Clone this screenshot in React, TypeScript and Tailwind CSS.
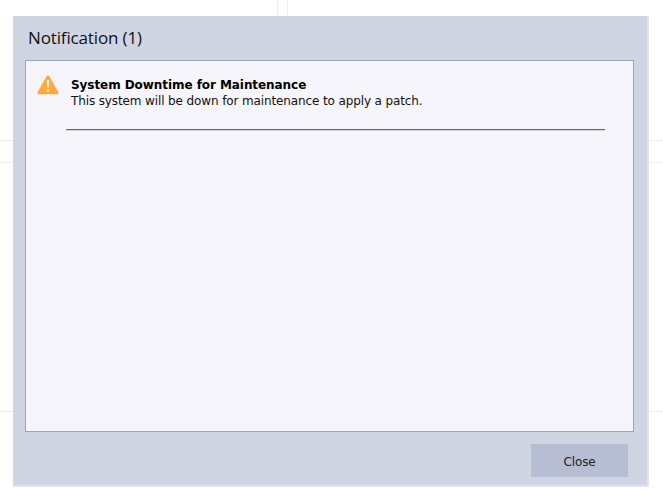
import { useState } from 'react';

// faint grid of the page sitting behind the dialog
function BackdropLines() {
  return (
    <div className="absolute inset-0 overflow-hidden">
      <div className="absolute left-[277px] top-0 h-[16px] w-px bg-[#eeeeee]" />
      <div className="absolute left-[287px] top-0 h-[16px] w-px bg-[#eeeeee]" />
      <div className="absolute left-0 top-[140px] h-px w-full bg-[#eeeeee]" />
      <div className="absolute left-0 top-[162px] h-px w-full bg-[#eeeeee]" />
      <div className="absolute left-0 top-[411px] h-px w-full bg-[#eeeeee]" />
    </div>
  );
}

function WarningIcon() {
  return (
    <svg width="22" height="20" viewBox="0 0 22 20" className="shrink-0">
      <path
        d="M11 0.5c.6 0 1.1.3 1.4.8l8.9 15.6c.6 1.1-.2 2.4-1.4 2.4H2.1c-1.2 0-2-1.3-1.4-2.4L9.6 1.3c.3-.5.8-.8 1.4-.8z"
        fill="#ffaa3b"
      />
      <path d="M9.7 5h2.6l-.5 8h-1.6z" fill="#ffe9cc" />
      <circle cx="11" cy="15.4" r="1.4" fill="#ffe9cc" />
    </svg>
  );
}

export default function App() {
  const [open, setOpen] = useState(true);

  return (
    <div className="relative h-[494px] w-[663px] overflow-hidden bg-white font-['DejaVu_Sans',sans-serif]">
      <BackdropLines />
      {open && (
        <div className="relative ml-[13px] mt-[16px] flex h-[469px] w-[634px] flex-col bg-[#cfd5e2] shadow-[1px_1px_0_1px_#e4e4e4]">
          <div className="flex h-[44px] items-center pb-[1px] pl-[15px] font-['Open_Sans',sans-serif] text-[17px] tracking-[-0.14px] text-[#111111]">
            Notification (1)
          </div>
          <div className="ml-[12px] mr-[13px] flex-1 border border-[#94a7c2] bg-[#f6f5fb] pl-[11px] pr-[28px] pt-[14px]">
            <div className="flex gap-[12px]">
              <WarningIcon />
              <div className="mt-[2px] text-[12px] leading-[16px] text-[#111111]">
                <div className="font-bold tracking-[-0.065px] text-black">System Downtime for Maintenance</div>
                <div className="tracking-[-0.12px]">This system will be down for maintenance to apply a patch.</div>
              </div>
            </div>
            <div className="ml-[29px] mt-[20px] h-[2px] border-t border-[#66666e] bg-[#d6d6de]" />
          </div>
          <div className="flex h-[53px] items-start justify-end pr-[19px] pt-[12px]">
            <button
              onClick={() => setOpen(false)}
              className="h-[33px] w-[97px] bg-[#b7bdd3] pt-[2px] text-[12px] tracking-[-0.1px] text-[#222222]"
            >
              Close
            </button>
          </div>
        </div>
      )}
    </div>
  );
}
